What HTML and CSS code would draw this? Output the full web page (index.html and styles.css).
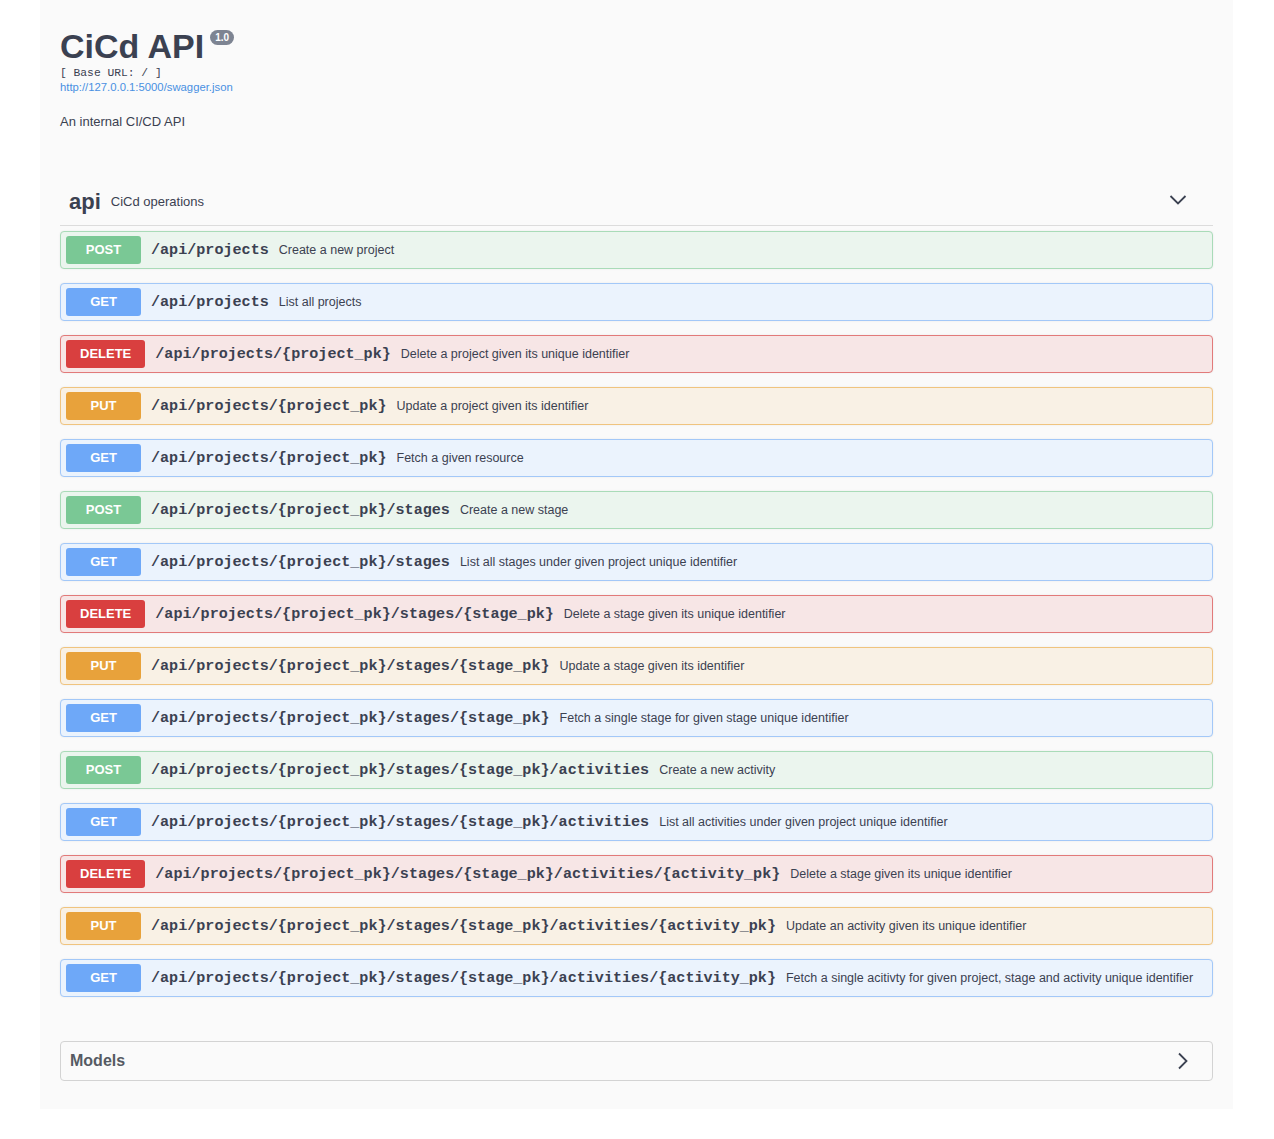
FILE: index.html
```html
<!DOCTYPE html>
<html lang="en">
<head>
<meta charset="utf-8">
<title>CiCd API</title>
<link rel="stylesheet" href="styles.css">
</head>
<body>
<div class="wrapper">
  <div class="info">
    <div class="title-row">
      <h2 class="title">CiCd API</h2>
      <span class="version">1.0</span>
    </div>
    <div class="base-url">[ Base URL: / ]</div>
    <a class="spec-link" href="#">http://127.0.0.1:5000/swagger.json</a>
    <div class="desc">An internal CI/CD API</div>
  </div>

  <div class="tag">
    <div class="tag-header">
      <span class="tag-name">api</span>
      <span class="tag-desc">CiCd operations</span>
      <svg class="chev-down" width="18" height="12" viewBox="0 0 18 12"><polyline points="1.5,2 9,9.5 16.5,2" fill="none" stroke="#3b4151" stroke-width="1.8"/></svg>
    </div>

    <div class="ops">
      <div class="op post"><span class="method">POST</span><span class="path">/api/projects</span><span class="summary">Create a new project</span></div>
      <div class="op get"><span class="method">GET</span><span class="path">/api/projects</span><span class="summary">List all projects</span></div>
      <div class="op delete"><span class="method">DELETE</span><span class="path">/api/projects/{project_pk}</span><span class="summary">Delete a project given its unique identifier</span></div>
      <div class="op put"><span class="method">PUT</span><span class="path">/api/projects/{project_pk}</span><span class="summary">Update a project given its identifier</span></div>
      <div class="op get"><span class="method">GET</span><span class="path">/api/projects/{project_pk}</span><span class="summary">Fetch a given resource</span></div>
      <div class="op post"><span class="method">POST</span><span class="path">/api/projects/{project_pk}/stages</span><span class="summary">Create a new stage</span></div>
      <div class="op get"><span class="method">GET</span><span class="path">/api/projects/{project_pk}/stages</span><span class="summary">List all stages under given project unique identifier</span></div>
      <div class="op delete"><span class="method">DELETE</span><span class="path">/api/projects/{project_pk}/stages/{stage_pk}</span><span class="summary">Delete a stage given its unique identifier</span></div>
      <div class="op put"><span class="method">PUT</span><span class="path">/api/projects/{project_pk}/stages/{stage_pk}</span><span class="summary">Update a stage given its identifier</span></div>
      <div class="op get"><span class="method">GET</span><span class="path">/api/projects/{project_pk}/stages/{stage_pk}</span><span class="summary">Fetch a single stage for given stage unique identifier</span></div>
      <div class="op post"><span class="method">POST</span><span class="path">/api/projects/{project_pk}/stages/{stage_pk}/activities</span><span class="summary">Create a new activity</span></div>
      <div class="op get"><span class="method">GET</span><span class="path">/api/projects/{project_pk}/stages/{stage_pk}/activities</span><span class="summary">List all activities under given project unique identifier</span></div>
      <div class="op delete"><span class="method">DELETE</span><span class="path">/api/projects/{project_pk}/stages/{stage_pk}/activities/{activity_pk}</span><span class="summary">Delete a stage given its unique identifier</span></div>
      <div class="op put"><span class="method">PUT</span><span class="path">/api/projects/{project_pk}/stages/{stage_pk}/activities/{activity_pk}</span><span class="summary">Update an activity given its unique identifier</span></div>
      <div class="op get"><span class="method">GET</span><span class="path">/api/projects/{project_pk}/stages/{stage_pk}/activities/{activity_pk}</span><span class="summary">Fetch a single acitivty for given project, stage and activity unique identifier</span></div>
    </div>
  </div>

  <div class="models">
    <span class="models-title">Models</span>
    <svg class="chev-right" width="12" height="18" viewBox="0 0 12 18"><polyline points="2,1.5 9.5,9 2,16.5" fill="none" stroke="#3b4151" stroke-width="1.8"/></svg>
  </div>
</div>
</body>
</html>
```

FILE: styles.css
```css
* { box-sizing: border-box; }

html, body {
  margin: 0;
  padding: 0;
  background: #ffffff;
}

body {
  font-family: "Liberation Sans", Arial, sans-serif;
  color: #3b4151;
}

.wrapper {
  width: 1193px;
  margin-left: 40px;
  background: #fafafa;
  padding: 26px 20px 28px 20px;
}

/* info */
.title-row {
  display: flex;
  align-items: flex-start;
  height: 40px;
}

.title {
  margin: 0;
  font-size: 34px;
  line-height: 40px;
  font-weight: 700;
  color: #3b4151;
}

.version {
  margin-top: 4px;
  margin-left: 6px;
  background: #7d8492;
  color: #fff;
  font-size: 10px;
  font-weight: 700;
  line-height: 11px;
  padding: 2px 5px;
  border-radius: 57px;
}

.base-url {
  font-family: "Liberation Mono", "Courier New", monospace;
  font-size: 11.3px;
  line-height: 14px;
  color: #3b4151;
}

.spec-link {
  display: block;
  font-size: 11.3px;
  line-height: 14px;
  color: #4990e2;
  text-decoration: none;
}

.desc {
  margin-top: 20px;
  font-size: 13px;
  line-height: 16px;
  color: #3b4151;
}

/* tag */
.tag {
  margin-top: 51px;
}

.tag-header {
  display: flex;
  align-items: center;
  height: 45px;
  padding: 0 26px 2px 9px;
  border-bottom: 1px solid #dcdcdc;
}

.tag-name {
  font-size: 22px;
  font-weight: 700;
  line-height: 26px;
}

.tag-desc {
  margin-left: 10px;
  font-size: 13px;
  line-height: 16px;
  flex: 1;
}

.chev-down {
  display: block;
  margin-bottom: 4px;
}

.ops {
  padding-top: 5px;
}

.op {
  display: flex;
  align-items: center;
  height: 38px;
  padding: 0 5px;
  margin-bottom: 14px;
  border: 1px solid;
  border-radius: 4px;
  box-shadow: 0 0 2px rgba(0, 0, 0, 0.08);
}

.method {
  min-width: 75px;
  height: 28px;
  padding: 0 14px;
  border-radius: 3px;
  color: #fff;
  font-size: 13px;
  font-weight: 700;
  line-height: 28px;
  text-align: center;
}

.path {
  margin-left: 10px;
  font-family: "Liberation Mono", "Courier New", monospace;
  font-size: 15.1px;
  font-weight: 700;
  color: #3b4151;
}

.summary {
  margin-left: 10px;
  font-size: 12.5px;
  color: #3b4151;
}

.op.post { background: #ebf5ee; border-color: #a9dbb8; }
.op.post .method { background: #7ac895; }

.op.get { background: #ebf3fd; border-color: #a3c8f8; }
.op.get .method { background: #6ea8f8; }

.op.delete { background: #f7e6e6; border-color: #e27a7a; }
.op.delete .method { background: #d93f3f; }

.op.put { background: #f9f1e5; border-color: #f0c47f; }
.op.put .method { background: #e8a23b; }

/* models */
.models {
  margin-top: 44px;
  height: 40px;
  display: flex;
  align-items: center;
  justify-content: space-between;
  padding: 0 23px 0 9px;
  border: 1px solid #d3d3d3;
  border-radius: 4px;
}

.models-title {
  font-size: 16px;
  font-weight: 700;
  color: #555a63;
}

.chev-right {
  display: block;
}
```
